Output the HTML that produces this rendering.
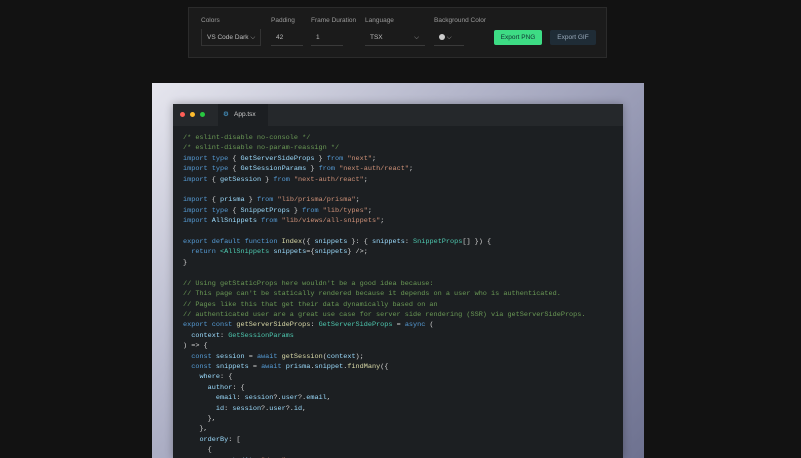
<!DOCTYPE html>
<html><head><style>
html,body{margin:0;width:801px;height:458px;overflow:hidden}
body{background:#121212;font-family:"Liberation Sans",sans-serif;position:relative}
.bar{position:absolute;left:188px;top:7px;width:419px;height:51px;background:#1b1b1b;border:1px solid #2b2b2b;box-sizing:border-box}
.lbl{position:absolute;top:9px;font-size:6.5px;color:#9a9a9a}
.inp{position:absolute;top:21px;height:17px;border-bottom:1px solid #3a3a3a;font-size:6.5px;color:#bbb;line-height:17px;padding-left:5px;box-sizing:border-box}
.btn{position:absolute;top:22px;height:15px;font-size:6.5px;line-height:15px;text-align:center;border-radius:2px}
.frame{position:absolute;left:152px;top:83px;width:492px;height:375px;background:linear-gradient(135deg,#e6e6ee 0%,#b6b8cc 35%,#8a8daa 70%,#6e7290 100%)}
.win{position:absolute;left:173px;top:104px;width:450px;height:354px;background:#1c1f22;box-shadow:0 0 8px rgba(0,0,0,.3)}
.tabs{height:22px;background:#25282b;position:relative}
.tab{position:absolute;left:45px;top:0;height:22px;width:50px;background:#1c1f22;font-size:6.5px;color:#ccc;line-height:22px;padding-left:16px;box-sizing:border-box}
.dot{position:absolute;top:8px;width:5px;height:5px;border-radius:50%}
pre{margin:0;position:absolute;left:10px;top:29px;font-family:"Liberation Mono",monospace;font-size:6.85px;line-height:10.4px;color:#d4d4d4}
.c{color:#6a9955}.k{color:#569cd6}.s{color:#ce9178}.f{color:#dcdcaa}.v{color:#9cdcfe}.t{color:#4ec9b0}
</style></head><body>
<div class="bar">
<div class="lbl" style="left:12px">Colors</div>
<div class="inp" style="left:12px;width:60px;border:1px solid #333;border-top:none">VS Code Dark ⌵</div>
<div class="lbl" style="left:82px">Padding</div>
<div class="inp" style="left:82px;width:32px">42</div>
<div class="lbl" style="left:122px">Frame Duration</div>
<div class="inp" style="left:122px;width:32px">1</div>
<div class="lbl" style="left:176px">Language</div>
<div class="inp" style="left:176px;width:60px">TSX<span style="float:right;margin-right:6px">⌵</span></div>
<div class="lbl" style="left:245px">Background Color</div>
<div class="inp" style="left:245px;width:30px"><span style="display:inline-block;width:6px;height:6px;border-radius:50%;background:#ccc;vertical-align:middle"></span> ⌵</div>
<div class="btn" style="left:305px;width:48px;background:#3ddc84;color:#133">Export PNG</div>
<div class="btn" style="left:361px;width:46px;background:#1f2c36;color:#9ab">Export GIF</div>
</div>
<div class="frame"></div>
<div class="win">
<div class="tabs">
<div class="dot" style="left:7px;background:#ff5f57"></div><div class="dot" style="left:17px;background:#febc2e"></div><div class="dot" style="left:27px;background:#28c840"></div>
<div class="tab"><span style="position:absolute;left:5px;color:#4aa3d8">⚙</span>App.tsx</div>
</div>
<pre><span class="c">/* eslint-disable no-console */
/* eslint-disable no-param-reassign */</span>
<span class="k">import type</span> { <span class="v">GetServerSideProps</span> } <span class="k">from</span> <span class="s">"next"</span>;
<span class="k">import type</span> { <span class="v">GetSessionParams</span> } <span class="k">from</span> <span class="s">"next-auth/react"</span>;
<span class="k">import</span> { <span class="v">getSession</span> } <span class="k">from</span> <span class="s">"next-auth/react"</span>;

<span class="k">import</span> { <span class="v">prisma</span> } <span class="k">from</span> <span class="s">"lib/prisma/prisma"</span>;
<span class="k">import type</span> { <span class="v">SnippetProps</span> } <span class="k">from</span> <span class="s">"lib/types"</span>;
<span class="k">import</span> <span class="v">AllSnippets</span> <span class="k">from</span> <span class="s">"lib/views/all-snippets"</span>;

<span class="k">export default function</span> <span class="f">Index</span>({ <span class="v">snippets</span> }: { <span class="v">snippets</span>: <span class="t">SnippetProps</span>[] }) {
  <span class="k">return</span> <span class="t">&lt;AllSnippets</span> <span class="v">snippets</span>={<span class="v">snippets</span>} /&gt;;
}

<span class="c">// Using getStaticProps here wouldn't be a good idea because:
// This page can't be statically rendered because it depends on a user who is authenticated.
// Pages like this that get their data dynamically based on an
// authenticated user are a great use case for server side rendering (SSR) via getServerSideProps.</span>
<span class="k">export const</span> <span class="f">getServerSideProps</span>: <span class="t">GetServerSideProps</span> = <span class="k">async</span> (
  <span class="v">context</span>: <span class="t">GetSessionParams</span>
) =&gt; {
  <span class="k">const</span> <span class="v">session</span> = <span class="k">await</span> <span class="f">getSession</span>(<span class="v">context</span>);
  <span class="k">const</span> <span class="v">snippets</span> = <span class="k">await</span> <span class="v">prisma</span>.<span class="v">snippet</span>.<span class="f">findMany</span>({
    <span class="v">where</span>: {
      <span class="v">author</span>: {
        <span class="v">email</span>: <span class="v">session</span>?.<span class="v">user</span>?.<span class="v">email</span>,
        <span class="v">id</span>: <span class="v">session</span>?.<span class="v">user</span>?.<span class="v">id</span>,
      },
    },
    <span class="v">orderBy</span>: [
      {
        <span class="v">createdAt</span>: <span class="s">"desc"</span>,</pre>
</div>
</body></html>
